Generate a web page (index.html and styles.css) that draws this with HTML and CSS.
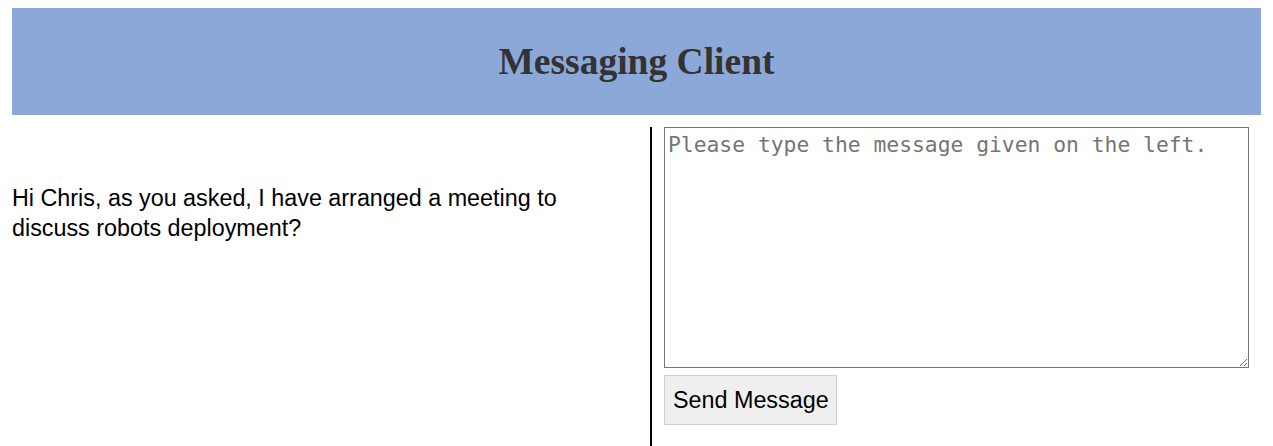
FILE: index.html
```html
<!DOCTYPE html>
<html>
<head>
<meta charset="utf-8">
<link rel="stylesheet" href="styles.css">
</head>
<body>
<div class="page">
  <header class="header"><h1 class="title">Messaging Client</h1></header>
  <main class="main">
    <section class="left">
      <p class="message">Hi Chris, as you asked, I have arranged a meeting to discuss robots deployment?</p>
    </section>
    <section class="right">
      <textarea class="input" placeholder="Please type the message given on the left."></textarea>
      <button class="send">Send Message</button>
    </section>
  </main>
</div>
</body>
</html>
```
FILE: styles.css
```css
html, body { margin: 0; padding: 0; background: #fff; }
body { margin: 8px; font-family: "Liberation Sans", Arial, sans-serif; overflow: hidden; }
.page { padding: 0 4px; }
.header {
  background: #8ca8d9;
  height: 107px;
  display: flex;
  align-items: center;
  justify-content: center;
}
.title {
  margin: 0;
  font-family: "Liberation Serif", "Times New Roman", serif;
  font-weight: bold;
  font-size: 37.5px;
  color: #333;
}
.main { display: flex; margin-top: 12px; height: 330px; }
.left { width: 638px; flex: none; }
.message {
  margin: 56px 0 0;
  font-size: 23.33px;
  line-height: 30px;
  color: #000;
  padding-right: 30px;
}
.right {
  flex: 1;
  border-left: 2px solid #000;
  padding: 0 12px;
  display: flex;
  flex-direction: column;
  align-items: flex-start;
}
.input {
  box-sizing: border-box;
  width: 100%;
  height: 241px;
  margin: 0;
  padding: 4px 3px 2px;
  border: 1px solid #767676;
  font-family: "DejaVu Sans Mono", monospace;
  font-size: 21.33px;
  resize: both;
}
.input::placeholder { color: #757575; }
.send {
  margin-top: 7px;
  height: 50px;
  padding: 0 7px 0 8px;
  background: #efefef;
  border: 1px solid #cfcfcf;
  font-family: "Liberation Sans", Arial, sans-serif;
  font-size: 23.33px;
  color: #000;
}
```
